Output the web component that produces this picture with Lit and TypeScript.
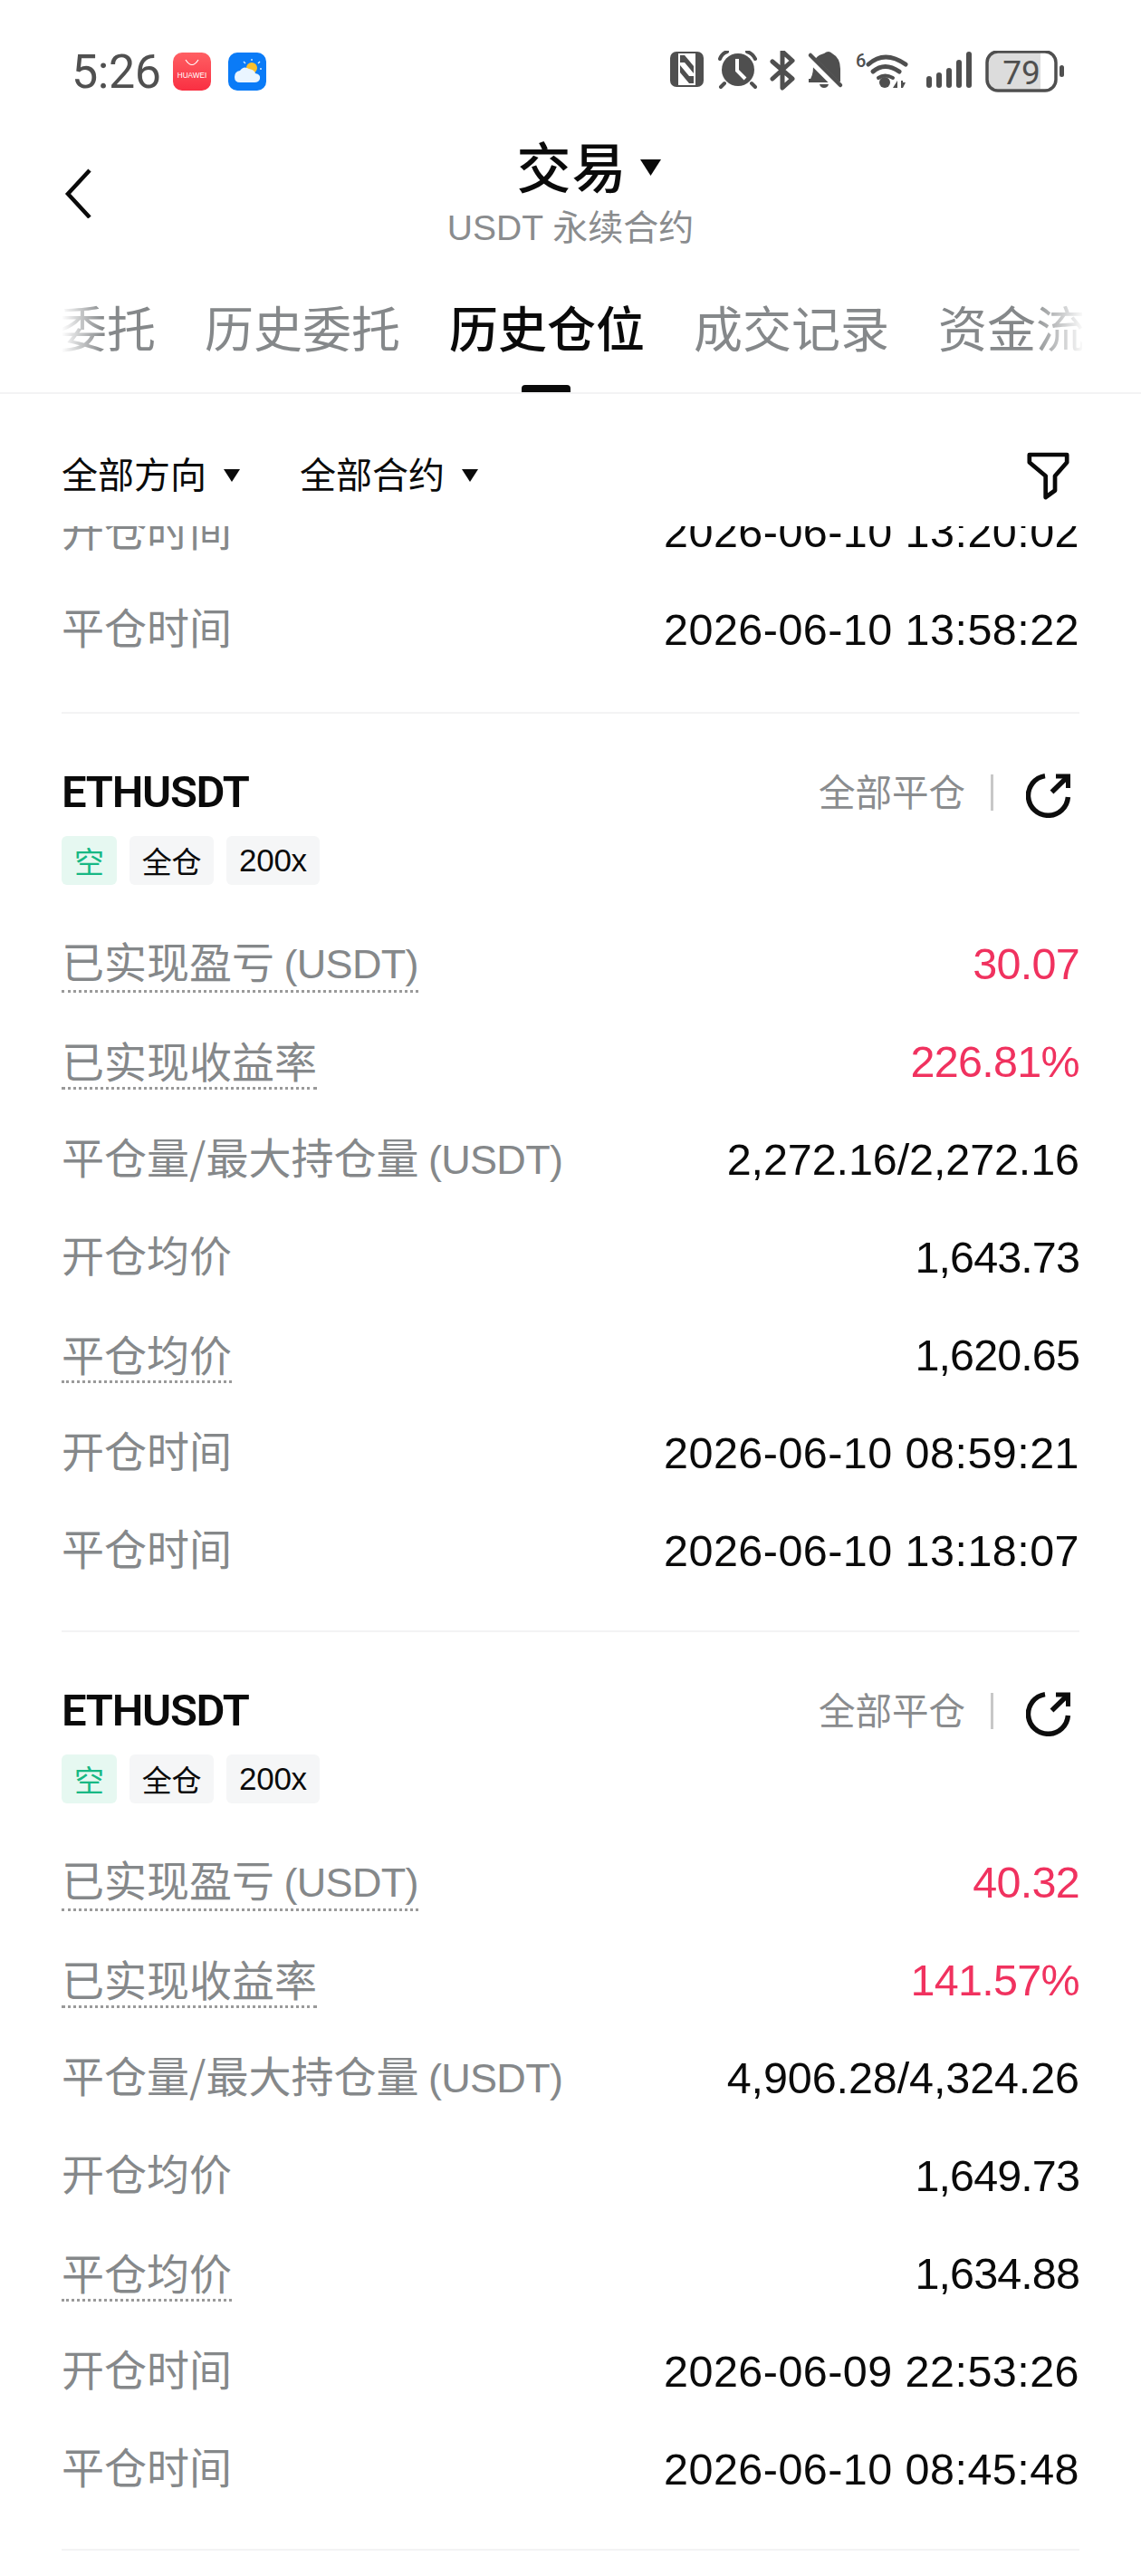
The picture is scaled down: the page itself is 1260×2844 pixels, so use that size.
import { LitElement, html, css, svg } from 'lit';
import { customElement } from 'lit/decorators.js';

const INK = '#4f4f4f';

const cards = [
  {
    pnl: '30.07', rate: '226.81%', size: '2,272.16/2,272.16', open: '1,643.73', close: '1,620.65',
    openTime: '2026-06-10 08:59:21', closeTime: '2026-06-10 13:18:07',
  },
  {
    pnl: '40.32', rate: '141.57%', size: '4,906.28/4,324.26', open: '1,649.73', close: '1,634.88',
    openTime: '2026-06-09 22:53:26', closeTime: '2026-06-10 08:45:48',
  },
];

const triangle = (w: number, h: number) => html`
  <svg width=${w} height=${h} viewBox="0 0 10 8" preserveAspectRatio="none"><path d="M0 0H10L5 8Z" fill="#0a0a0a"/></svg>`;

const shareIcon = html`
  <svg class="share" width="50" height="50" viewBox="0 0 50 50" fill="none" stroke="#0d0d0d">
    <path d="M21 3.6A22 22 0 1 0 46.4 27" stroke-width="5.5"/>
    <path d="M28.5 21.5L46 4.5" stroke-width="5.5"/>
    <path d="M33 1.5H49V17H44V6.5H33Z" fill="#0d0d0d" stroke="none"/>
  </svg>`;

const statusIcons = svg`
  <g fill="${INK}">
    <rect x="0" y="1" width="37" height="39" rx="7"/>
    <path d="M9 3H28V38H9Z" fill="#fff"/>
    <path d="M11 5H16L26 17V25L16 13H11ZM26 36H21L11 24V16L21 28H26Z" fill="${INK}"/>
  </g>
  <g transform="translate(53 0)">
    <circle cx="22" cy="21" r="18" fill="${INK}"/>
    <path d="M21 9V22L30 31" fill="none" stroke="#fff" stroke-width="4"/>
    <path d="M2 9Q4 3 10 1M32 1Q38 3 41 9M7 36L3 40M37 36L41 40" fill="none" stroke="${INK}" stroke-width="4" stroke-linecap="round"/>
  </g>
  <path d="M114 12L136 31L125 41V24M114 31L136 11L125 1V17" transform="translate(-1 0)" fill="none" stroke="${INK}" stroke-width="5" stroke-linejoin="round" stroke-linecap="round"/>
  <g transform="translate(153 0)">
    <path d="M0 34Q5 28 5 18Q5 6 17 3Q22 -1 26 3Q35 8 35 20V34Z" fill="${INK}"/>
    <rect x="0" y="31" width="32" height="4" fill="${INK}"/>
    <path d="M12 37H22Q21 41 17 41Q13 41 12 37Z" fill="${INK}"/>
    <path d="M0 7L34 41" stroke="#fff" stroke-width="9"/>
    <path d="M2 5L35 38" stroke="${INK}" stroke-width="4.5" stroke-linecap="round"/>
  </g>
  <g transform="translate(205 0)">
    <text x="0" y="18" font-family="Roboto, sans-serif" font-size="20" font-weight="500" fill="${INK}">6</text>
    <g fill="none" stroke="${INK}" stroke-width="5" stroke-linecap="round">
      <path d="M14 15Q32 -1 55 15"/>
      <path d="M19 23Q32 12 48 23"/>
      <path d="M25 30Q32 25 41 30" stroke-width="4"/>
    </g>
    <circle cx="32" cy="35" r="6" fill="${INK}"/>
    <path d="M41 41L46 33V41ZM50 33V41H52L55 35H52V33Z" fill="${INK}"/>
  </g>
  <g fill="${INK}" transform="translate(283 0)">
    <rect x="0" y="28" width="6" height="13" rx="3"/>
    <rect x="11" y="24" width="6" height="17" rx="3"/>
    <rect x="22" y="19" width="6" height="22" rx="3"/>
    <rect x="33" y="10" width="6" height="31" rx="3"/>
    <rect x="44" y="1" width="6" height="40" rx="3"/>
  </g>
  <g transform="translate(348 0)">
    <path d="M10 2H61V42H10Q3 42 3 35V9Q3 2 10 2Z" fill="#dcdcdc"/>
    <rect x="2" y="1" width="76" height="43" rx="12" fill="none" stroke="${INK}" stroke-width="3.5"/>
    <rect x="82" y="16" width="5" height="13" rx="2.5" fill="${INK}"/>
    <text x="40" y="37" text-anchor="middle" font-family="Roboto, sans-serif" font-size="37" fill="${INK}">79</text>
  </g>`;

@customElement('app-root')
export class AppRoot extends LitElement {
  static styles = css`
    :host {
      display: block;
      width: 1260px;
      height: 2844px;
      overflow: hidden;
      background: #fff;
      color: #0a0a0a;
      font-family: "Liberation Sans", "Noto Sans CJK SC", sans-serif;
    }
    .status {
      display: flex;
      align-items: center;
      height: 130px;
      padding: 28px 84px 0 79px;
      box-sizing: border-box;
    }
    .time {
      font: 400 52px Roboto, sans-serif;
      color: #505050;
      margin-right: 13px;
      letter-spacing: -0.4px;
    }
    .app { margin-right: 19px; display: block; }
    .sys { margin-left: auto; display: block; }

    .title {
      position: relative;
      height: 145px;
      display: flex;
      flex-direction: column;
      align-items: center;
    }
    .back { position: absolute; left: 70px; top: 55px; }
    .title-main {
      display: flex;
      align-items: center;
      gap: 14px;
      height: 90px;
      padding-left: 40px;
      margin-top: 7px;
      font: 500 60px "Noto Sans CJK SC", sans-serif;
      line-height: 90px;
      letter-spacing: 1px;
    }
    .title-main svg { margin-top: 6px; }
    .title-sub {
      font: 400 39px "Liberation Sans", "Noto Sans CJK SC", sans-serif;
      line-height: 50px;
      color: #8a8c8e;
    }

    .tabs {
      height: 160px;
      padding-left: 68px;
      box-sizing: border-box;
      border-bottom: 2px solid #f3f3f4;
    }
    .tab-window {
      width: 1127px;
      height: 158px;
      overflow: hidden;
      -webkit-mask-image: linear-gradient(90deg, transparent 0, #000 46px, #000 1070px, rgba(0,0,0,.05) 1127px);
      mask-image: linear-gradient(90deg, transparent 0, #000 46px, #000 1070px, rgba(0,0,0,.05) 1127px);
    }
    .tab-row {
      display: flex;
      gap: 54px;
      margin-left: -112px;
      width: 1500px;
    }
    .tab {
      position: relative;
      flex: none;
      height: 158px;
      padding-top: 46px;
      box-sizing: border-box;
      font: 400 54px "Noto Sans CJK SC", sans-serif;
      line-height: 80px;
      color: #85888a;
    }
    .tab.on { color: #0a0a0a; font-weight: 500; }
    .tab.on::after {
      content: "";
      position: absolute;
      left: 80px;
      bottom: 0;
      width: 54px;
      height: 8px;
      border-radius: 4px 4px 0 0;
      background: #0a0a0a;
    }

    .filters {
      display: flex;
      align-items: center;
      height: 146px;
      padding: 28px 79px 0 68px;
      box-sizing: border-box;
    }
    .filter {
      display: flex;
      align-items: center;
      gap: 19px;
      margin-right: 66px;
      font: 400 40px "Noto Sans CJK SC", sans-serif;
    }
    .filter svg { margin-top: 5px; }
    .funnel { margin-left: auto; margin-top: 6px; display: block; }

    .list {
      height: 2261px;
      overflow: hidden;
      padding: 0 68px;
    }
    .tail { margin-top: -48px; }
    .tail-end { height: 37px; }
    .card {
      border-top: 2px solid #f3f3f4;
      padding: 57px 0 34px;
    }
    .head {
      display: flex;
      align-items: center;
      height: 60px;
    }
    .symbol {
      font: 600 49px Roboto, sans-serif;
      letter-spacing: -1.3px;
      line-height: 60px;
    }
    .close-all {
      margin-left: auto;
      margin-top: -5px;
      font: 400 40.5px "Noto Sans CJK SC", sans-serif;
      color: #8a8c8e;
    }
    .sep {
      width: 3px;
      height: 40px;
      margin: 0 36px 0 28px;
      background: #c8c8c8;
    }
    .share { margin-right: 9px; margin-top: 5px; display: block; }
    .tags {
      display: flex;
      gap: 14px;
      margin-top: 18px;
      margin-bottom: 33px;
    }
    .tag {
      height: 54px;
      padding: 0 14px;
      display: flex;
      align-items: center;
      border-radius: 6px;
      background: #f5f6f7;
      font: 400 33px "Noto Sans CJK SC", sans-serif;
      letter-spacing: -0.3px;
    }
    .tag.short { background: #e6f8f1; color: #17b884; }
    .tag.lev { font: 400 35px "Liberation Sans", sans-serif; }

    .row {
      display: flex;
      align-items: center;
      justify-content: space-between;
      height: 108px;
    }
    .label {
      margin-bottom: 8px;
      font: 400 47px "Noto Sans CJK SC", sans-serif;
      line-height: 60px;
      color: #85888a;
    }
    .label.dotted {
      display: inline-block;
      line-height: 56px;
      padding-bottom: 2px;
      margin-bottom: 0;
      border-bottom: 3px dotted #9a9a9a;
    }
    .unit {
      font: 400 45px "Liberation Sans", sans-serif;
      letter-spacing: -0.7px;
    }
    .value {
      font-size: 48.5px;
      line-height: 60px;
      color: #0a0a0a;
    }
    .value.date { letter-spacing: 0.45px; }
    .value.price { letter-spacing: -0.9px; }
    .value.size { letter-spacing: -0.1px; }
    .value.up { color: #f0325f; letter-spacing: -0.7px; }
  `;

  private row(label: unknown, value: string, kind: string, dotted = false) {
    return html`
      <div class="row">
        <span class="label ${dotted ? 'dotted' : ''}">${label}</span>
        <span class="value ${kind}">${value}</span>
      </div>`;
  }

  private renderCard(c: (typeof cards)[number]) {
    const usdt = html` <span class="unit">(USDT)</span>`;
    return html`
      <section class="card">
        <div class="head">
          <span class="symbol">ETHUSDT</span>
          <span class="close-all">全部平仓</span>
          <span class="sep"></span>
          ${shareIcon}
        </div>
        <div class="tags">
          <span class="tag short">空</span>
          <span class="tag">全仓</span>
          <span class="tag lev">200x</span>
        </div>
        ${this.row(html`已实现盈亏${usdt}`, c.pnl, 'up', true)}
        ${this.row('已实现收益率', c.rate, 'up', true)}
        ${this.row(html`平仓量/最大持仓量${usdt}`, c.size, 'size')}
        ${this.row('开仓均价', c.open, 'price')}
        ${this.row('平仓均价', c.close, 'price', true)}
        ${this.row('开仓时间', c.openTime, 'date')}
        ${this.row('平仓时间', c.closeTime, 'date')}
      </section>`;
  }

  render() {
    return html`
      <div class="status">
        <span class="time">5:26</span>
        <svg class="app" width="42" height="42" viewBox="0 0 42 42">
          <defs>
            <linearGradient id="hw" x1="0" y1="0" x2="0" y2="1">
              <stop offset="0" stop-color="#ff5f63"/><stop offset="1" stop-color="#f92f42"/>
            </linearGradient>
          </defs>
          <rect width="42" height="42" rx="10" fill="url(#hw)"/>
          <path d="M14 8Q21 19 28 8" fill="none" stroke="#fff" stroke-width="1.2"/>
          <text x="21" y="28" text-anchor="middle" font-family="Liberation Sans, sans-serif" font-size="8.2" fill="#fff">HUAWEI</text>
        </svg>
        <svg class="app" width="42" height="42" viewBox="0 0 42 42">
          <rect width="42" height="42" rx="10" fill="#0a7bf7"/>
          <circle cx="26" cy="17" r="6" fill="#fbc02d"/>
          <path d="M26 7V9M17 10L19 12M35 10L33 12M37 18H35" stroke="#d6ecff" stroke-width="1.4"/>
          <path d="M13 33Q7 33 7 27Q7 21 13 20Q17 14 23 18Q29 19 30 23Q36 24 35 29Q34 33 29 33Z" fill="#eaf5ff"/>
        </svg>
        <svg class="sys" width="436" height="46" viewBox="0 0 436 46">${statusIcons}</svg>
      </div>

      <div class="title">
        <svg class="back" width="36" height="56" viewBox="0 0 36 56" fill="none">
          <path d="M29 3L5 29L29 55" stroke="#0a0a0a" stroke-width="4.5"/>
        </svg>
        <div class="title-main">交易 ${triangle(23, 18)}</div>
        <div class="title-sub">USDT 永续合约</div>
      </div>

      <div class="tabs">
        <div class="tab-window">
          <div class="tab-row">
            <span class="tab">当前委托</span>
            <span class="tab">历史委托</span>
            <span class="tab on">历史仓位</span>
            <span class="tab">成交记录</span>
            <span class="tab">资金流水</span>
          </div>
        </div>
      </div>

      <div class="filters">
        <span class="filter">全部方向 ${triangle(18, 14)}</span>
        <span class="filter">全部合约 ${triangle(18, 14)}</span>
        <svg class="funnel" width="47" height="53" viewBox="0 0 50 56" fill="none">
          <path d="M3 3H47V12L33 28V45L22 53V28L3 12Z" stroke="#0a0a0a" stroke-width="5" stroke-linejoin="round"/>
        </svg>
      </div>

      <div class="list">
        <div class="tail">
          ${this.row('开仓时间', '2026-06-10 13:20:02', 'date')}
          ${this.row('平仓时间', '2026-06-10 13:58:22', 'date')}
          <div class="tail-end"></div>
        </div>
        ${cards.map(c => this.renderCard(c))}
        <div class="card"></div>
      </div>
    `;
  }
}
